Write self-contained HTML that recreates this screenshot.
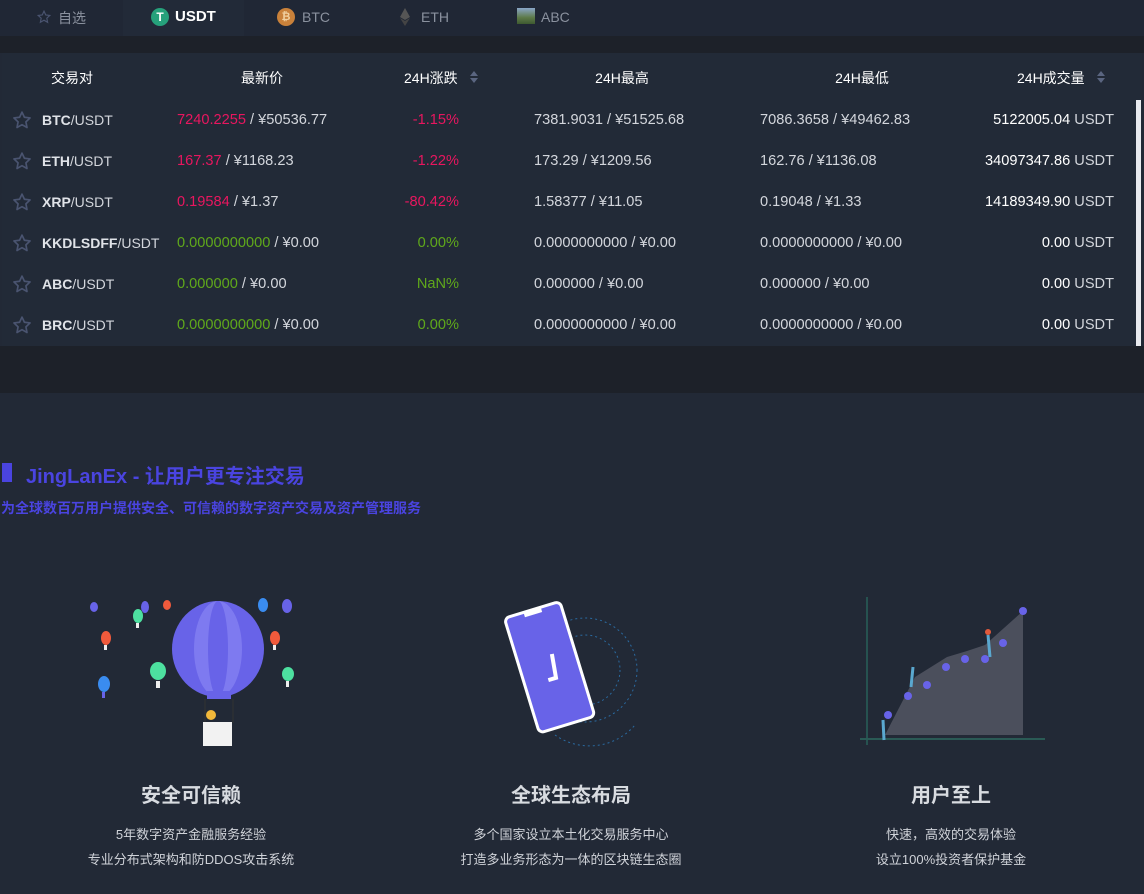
<!DOCTYPE html>
<html><head><meta charset="utf-8"><style>
*{margin:0;padding:0;box-sizing:border-box}
body{width:1144px;height:894px;background:#222936;font-family:"Liberation Sans","Noto Sans CJK SC",sans-serif;color:#d3d6dc;font-size:14px;position:relative;overflow:hidden}
.a{position:absolute;white-space:nowrap}
.tabs{position:absolute;left:0;top:0;width:1144px;height:36px;background:#202735}
.strip{position:absolute;left:0;top:36px;width:1144px;height:17px;background:#1d2129}
.panel{position:absolute;left:2px;top:53px;width:1140px;height:293px;background:#222a37}
.dark{position:absolute;left:0;top:346px;width:1144px;height:47px;background:#1d2129}
.r{color:#e8165f}.g{color:#5fa81b}
.th{color:#fff;font-size:14px}
.n{font-size:14.6px}
b{font-weight:bold;color:#e0e3e8}
.ctr{text-align:center;transform:translateX(-50%)}
</style></head><body>
<div class="tabs"></div>
<div class="a" style="left:123px;top:0;width:121px;height:36px;background:#222a38"></div>
<svg class="a" style="left:37px;top:10px" width="14" height="14" viewBox="0 0 24 24"><path d="M12 2l3 6.5 7 .8-5.2 4.8 1.4 7L12 17.5 5.8 21l1.4-7L2 9.3l7-.8z" fill="none" stroke="#4a5470" stroke-width="2"/></svg>
<div class="a" style="left:58px;top:8px;color:#8a919e">自选</div>
<div class="a" style="left:151px;top:8px;width:18px;height:18px;border-radius:50%;background:#26a17b;color:#fff;font-size:12px;font-weight:bold;text-align:center;line-height:18px">T</div>
<div class="a" style="left:175px;top:8px;color:#fff;font-weight:bold;font-size:15px">USDT</div>
<div class="a" style="left:277px;top:8px;width:18px;height:18px;border-radius:50%;background:#c9813a;color:#f0d0a0;font-size:11px;font-weight:bold;text-align:center;line-height:18px">₿</div>
<div class="a" style="left:302px;top:9px;color:#8a919e">BTC</div>
<svg class="a" style="left:400px;top:8px" width="10" height="18" viewBox="0 0 10 18"><path d="M5 0L0 9l5 3 5-3z" fill="#555"/><path d="M5 13L0 10l5 8 5-8z" fill="#444"/></svg>
<div class="a" style="left:421px;top:9px;color:#8a919e">ETH</div>
<div class="a" style="left:517px;top:8px;width:18px;height:16px;background:linear-gradient(#8aa6c8,#5d7a48 60%,#3e5a30)"></div>
<div class="a" style="left:541px;top:9px;color:#8a919e">ABC</div>
<div class="strip"></div>
<div class="panel"></div>
<div class="a" style="left:1136px;top:100px;width:5px;height:246px;background:#e8eaee"></div>
<div class="dark"></div>

<div class="a th ctr" style="left:72px;top:68px">交易对</div>
<div class="a th ctr" style="left:262px;top:68px">最新价</div>
<div class="a th" style="left:404px;top:68px">24H涨跌</div>
<svg class="a" style="left:469px;top:70px" width="10" height="14"><path d="M5 1l4 5H1zM5 13l4-5H1z" fill="#5a6580"/></svg>
<div class="a th ctr" style="left:622px;top:68px">24H最高</div>
<div class="a th ctr" style="left:862px;top:68px">24H最低</div>
<div class="a th" style="left:1017px;top:68px">24H成交量</div>
<svg class="a" style="left:1096px;top:70px" width="10" height="14"><path d="M5 1l4 5H1zM5 13l4-5H1z" fill="#5a6580"/></svg>

<div id="rows"></div>
<script>
const rows=[
["BTC","7240.2255","¥50536.77","-1.15%","7381.9031 / ¥51525.68","7086.3658 / ¥49462.83","5122005.04","r"],
["ETH","167.37","¥1168.23","-1.22%","173.29 / ¥1209.56","162.76 / ¥1136.08","34097347.86","r"],
["XRP","0.19584","¥1.37","-80.42%","1.58377 / ¥11.05","0.19048 / ¥1.33","14189349.90","r"],
["KKDLSDFF","0.0000000000","¥0.00","0.00%","0.0000000000 / ¥0.00","0.0000000000 / ¥0.00","0.00","g"],
["ABC","0.000000","¥0.00","NaN%","0.000000 / ¥0.00","0.000000 / ¥0.00","0.00","g"],
["BRC","0.0000000000","¥0.00","0.00%","0.0000000000 / ¥0.00","0.0000000000 / ¥0.00","0.00","g"]];
let h="";
rows.forEach((r,i)=>{const y=110+i*41;
h+=`<svg class="a" style="left:12px;top:${y}px" width="20" height="20" viewBox="0 0 24 24"><path d="M12 2.5l2.9 6.2 6.8.8-5 4.7 1.3 6.8L12 17.6 6 21l1.3-6.8-5-4.7 6.8-.8z" fill="none" stroke="#4a5470" stroke-width="2" stroke-linejoin="round"/></svg>
<div class="a" style="left:42px;top:${y+2}px"><b>${r[0]}</b>/USDT</div>
<div class="a n" style="left:177px;top:${y+2}px"><span class="${r[7]}">${r[1]}</span> / ${r[2]}</div>
<div class="a n ${r[7]}" style="right:685px;top:${y+2}px">${r[3]}</div>
<div class="a n" style="left:534px;top:${y+2}px">${r[4]}</div>
<div class="a n" style="left:760px;top:${y+2}px">${r[5]}</div>
<div class="a n" style="right:30px;top:${y+2}px"><span style="color:#fff">${r[6]}</span> USDT</div>`;});
document.getElementById('rows').innerHTML=h;
</script>

<div class="a" style="left:2px;top:463px;width:10px;height:19px;background:#4a44e0"></div>
<div class="a" style="left:26px;top:460px;color:#4a44e0;font-size:20px;font-weight:bold">JingLanEx - 让用户更专注交易</div>
<div class="a" style="left:1px;top:498px;color:#4a44e0;font-size:14px;font-weight:bold">为全球数百万用户提供安全、可信赖的数字资产交易及资产管理服务</div>

<svg class="a" style="left:80px;top:595px" width="230" height="155">
<ellipse cx="138" cy="54" rx="46" ry="48" fill="#6863e8"/>
<ellipse cx="138" cy="54" rx="24" ry="48" fill="#7e7af0"/>
<ellipse cx="138" cy="54" rx="10" ry="48" fill="#6863e8"/>
<rect x="127" y="96" width="24" height="8" fill="#6863e8"/>
<line x1="125" y1="104" x2="125" y2="128" stroke="#333" /><line x1="153" y1="104" x2="153" y2="128" stroke="#333"/>
<circle cx="131" cy="120" r="5" fill="#f2b83a"/>
<rect x="123" y="127" width="29" height="24" fill="#f2f2f2"/>
<g><ellipse cx="14" cy="12" rx="4" ry="5" fill="#6863e8"/><ellipse cx="65" cy="12" rx="4" ry="6" fill="#6863e8"/><ellipse cx="87" cy="10" rx="4" ry="5" fill="#f05a3c"/><ellipse cx="58" cy="21" rx="5" ry="7" fill="#4de0a0"/><ellipse cx="183" cy="10" rx="5" ry="7" fill="#3a8cf0"/><ellipse cx="207" cy="11" rx="5" ry="7" fill="#6863e8"/><ellipse cx="26" cy="43" rx="5" ry="7" fill="#f05a3c"/><ellipse cx="195" cy="43" rx="5" ry="7" fill="#f05a3c"/><ellipse cx="78" cy="76" rx="8" ry="9" fill="#4de0a0"/><ellipse cx="208" cy="79" rx="6" ry="7" fill="#4de0a0"/><ellipse cx="24" cy="89" rx="6" ry="8" fill="#3a8cf0"/>
<rect x="76" y="86" width="4" height="7" fill="#eee"/><rect x="206" y="86" width="3" height="6" fill="#eee"/><rect x="22" y="97" width="3" height="6" fill="#6863e8"/><rect x="56" y="28" width="3" height="5" fill="#eee"/><rect x="24" y="50" width="3" height="5" fill="#eee"/><rect x="193" y="50" width="3" height="5" fill="#eee"/></g>
</svg>
<svg class="a" style="left:490px;top:595px" width="170" height="160">
<g fill="none" stroke="#2a6aa0" stroke-dasharray="2 3"><circle cx="95" cy="75" r="52"/><circle cx="95" cy="75" r="35"/><path d="M65 140a60 60 0 0 0 80-10"/></g>
<g transform="rotate(-17 60 70)"><rect x="30" y="12" width="58" height="120" rx="5" fill="#6863e8" stroke="#fff" stroke-width="3"/><path d="M50 13h18v4H50z" fill="#fff"/><path d="M65 60l-3 24h-8" fill="none" stroke="#fff" stroke-width="4"/></g>
</svg>
<svg class="a" style="left:855px;top:595px" width="195" height="155">
<line x1="12" y1="2" x2="12" y2="150" stroke="#2a7a6a"/>
<line x1="5" y1="144" x2="190" y2="144" stroke="#2a5a55" stroke-width="2"/>
<path d="M30 140L60 82L92 62L112 56L130 50L168 16L168 140Z" fill="#4b4f5c"/>
<g fill="#6863e8"><circle cx="33" cy="120" r="4"/><circle cx="53" cy="101" r="4"/><circle cx="72" cy="90" r="4"/><circle cx="91" cy="72" r="4"/><circle cx="110" cy="64" r="4"/><circle cx="130" cy="64" r="4"/><circle cx="148" cy="48" r="4"/><circle cx="168" cy="16" r="4"/></g>
<path d="M58 72l-2 20M133 40l2 22" stroke="#5aa8d0" stroke-width="3"/><circle cx="133" cy="37" r="3" fill="#e05a3c"/><path d="M28 125l1 20" stroke="#5aa8d0" stroke-width="3"/>
</svg>

<div class="a ctr" style="left:191px;top:779px;font-size:20px;font-weight:bold;color:#d8dbe0">安全可信赖</div>
<div class="a ctr" style="left:571px;top:779px;font-size:20px;font-weight:bold;color:#d8dbe0">全球生态布局</div>
<div class="a ctr" style="left:951px;top:779px;font-size:20px;font-weight:bold;color:#d8dbe0">用户至上</div>
<div class="a ctr" style="left:191px;top:822px;font-size:13px;line-height:25px;color:#d0d3d9">5年数字资产金融服务经验<br>专业分布式架构和防DDOS攻击系统</div>
<div class="a ctr" style="left:571px;top:822px;font-size:13px;line-height:25px;color:#d0d3d9">多个国家设立本土化交易服务中心<br>打造多业务形态为一体的区块链生态圈</div>
<div class="a ctr" style="left:951px;top:822px;font-size:13px;line-height:25px;color:#d0d3d9">快速，高效的交易体验<br>设立100%投资者保护基金</div>
</body></html>
